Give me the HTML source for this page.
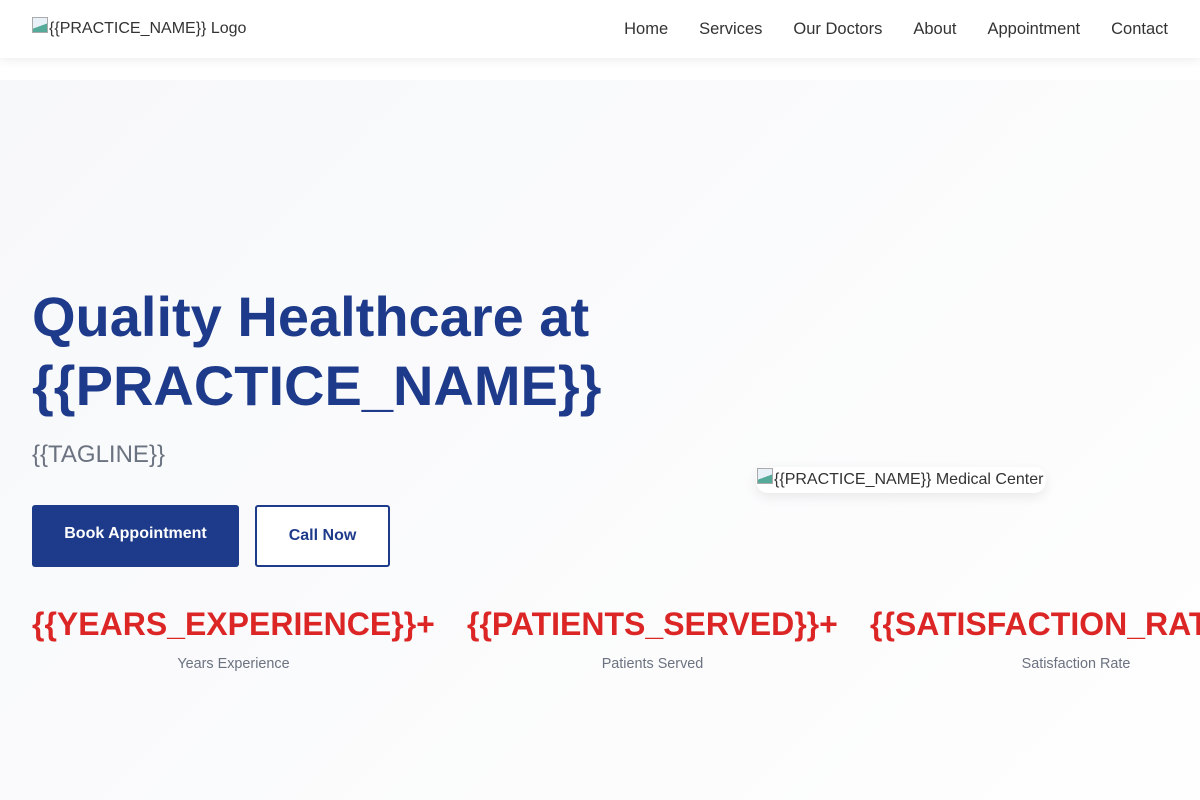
<!DOCTYPE html>
<html><head><style>
*{margin:0;padding:0;box-sizing:border-box}
body{width:1200px;height:800px;overflow:hidden;font-family:"Liberation Sans",Arial,sans-serif;background:#fff;position:relative}
header{position:absolute;top:0;left:0;width:1200px;height:58px;background:#fff;box-shadow:0 2px 10px rgba(0,0,0,.08);z-index:2}
.logo{position:absolute;left:32px;top:20px;font-size:16px;color:#333;display:flex;align-items:flex-start;white-space:nowrap}
.ic{display:inline-block;width:16px;height:16px;border:1px solid #aaa;background:linear-gradient(160deg,#e8f0f8 55%,#5a9 56%);margin-right:1px;margin-top:-3px}
nav{position:absolute;right:32px;top:20px;font-size:16.5px;color:#333;white-space:nowrap}
nav span{margin-left:31px}
.hero{position:absolute;top:80px;left:0;width:1200px;height:720px;background:linear-gradient(135deg,#f7f8fa,#fefefe)}
h1{position:absolute;left:32px;top:282px;font-size:56px;line-height:69px;color:#1e3a8a;font-weight:700;white-space:nowrap}
.tag{position:absolute;left:32px;top:441px;font-size:24px;color:#6b7280}
.b1{position:absolute;left:32px;top:505px;width:207px;height:62px;background:#1e3a8a;color:#fff;font-weight:700;font-size:16px;text-align:center;line-height:58px;border-radius:3px}
.b2{position:absolute;left:255px;top:505px;width:135px;height:62px;border:2px solid #1e3a8a;color:#1e3a8a;font-weight:700;font-size:16px;text-align:center;line-height:58px;border-radius:3px;background:#fff}
.img{position:absolute;left:756px;top:467px;height:26px;padding:4px 3px 0 1px;background:#fff;border-radius:12px;box-shadow:0 4px 12px rgba(0,0,0,.08);font-size:16px;color:#333;display:flex;align-items:flex-start;white-space:nowrap}
.st{position:absolute;top:606px;font-size:32px;font-weight:700;color:#dc2626;white-space:nowrap}
.sl{position:absolute;top:656px;font-size:14.4px;color:#6b7280;text-align:center}
</style></head><body>
<header>
<div class="logo"><span class="ic"></span>{{PRACTICE_NAME}} Logo</div>
<nav><span>Home</span><span>Services</span><span>Our Doctors</span><span>About</span><span>Appointment</span><span>Contact</span></nav>
</header>
<div class="hero"></div>
<h1>Quality Healthcare at<br>{{PRACTICE_NAME}}</h1>
<div class="tag">{{TAGLINE}}</div>
<div class="b1">Book Appointment</div>
<div class="b2">Call Now</div>
<div class="img"><span class="ic"></span>{{PRACTICE_NAME}} Medical Center</div>
<div class="st" style="left:32px">{{YEARS_EXPERIENCE}}+</div>
<div class="st" style="left:467px">{{PATIENTS_SERVED}}+</div>
<div class="st" style="left:870px">{{SATISFACTION_RATE}}%</div>
<div class="sl" style="left:32px;width:403px">Years Experience</div>
<div class="sl" style="left:467px;width:371px">Patients Served</div>
<div class="sl" style="left:952px;width:248px">Satisfaction Rate</div>
</body></html>
